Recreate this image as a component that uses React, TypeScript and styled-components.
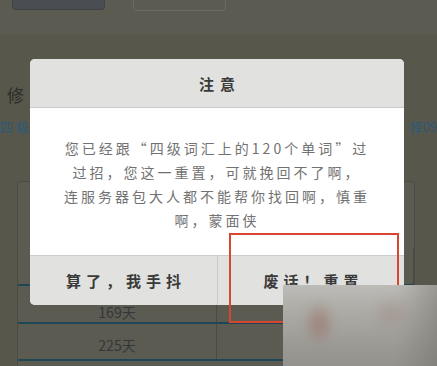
import React from "react";
import styled, { createGlobalStyle } from "styled-components";

const GlobalStyle = createGlobalStyle`
  html, body {
    margin: 0;
    padding: 0;
    background: #58574c;
  }
  body {
    font-family: "Noto Sans CJK SC", "Noto Sans", sans-serif;
  }
`;

const Page = styled.div`
  position: relative;
  width: 437px;
  height: 366px;
  overflow: hidden;
  background: #58574c;
`;

const TopBar = styled.div`
  display: flex;
  align-items: flex-start;
  gap: 28px;
  height: 35px;
  padding-left: 12px;
  background: #5c5b51;
`;

const TabButton = styled.div<{ $active?: boolean }>`
  width: 93px;
  height: ${(p) => (p.$active ? "10px" : "11px")};
  box-sizing: border-box;
  border-radius: 0 0 4px 4px;
  background: ${(p) => (p.$active ? "#4a4d51" : "transparent")};
  border: 1px solid ${(p) => (p.$active ? "#3f4246" : "#6b6a60")};
  border-top: none;
`;

const Heading = styled.div`
  padding: 50px 0 0 7px;
  height: 28px;
  font-size: 17px;
  line-height: 20px;
  color: #2d2d28;
`;

const InfoRow = styled.div`
  display: flex;
  justify-content: space-between;
  height: 62px;
  padding-top: 6px;
  font-size: 13px;
  line-height: 16px;
  color: #2b5a78;
`;

const Panel = styled.div`
  margin: 0 22px 0 17px;
  height: 200px;
  border-radius: 4px 4px 0 0;
  border: 1px solid #4d4c44;
  border-bottom: none;
  background: #5c5b51;
  display: flex;
  flex-direction: column;
  padding-top: 66px;
`;

const TableRow = styled.div<{ $height?: number }>`
  display: grid;
  grid-template-columns: 199px 1fr;
  height: ${(p) => p.$height ?? 38}px;
  flex-shrink: 0;
  border-bottom: 2px solid #1d4656;
  box-sizing: border-box;
`;

const Cell = styled.div<{ $offset?: number }>`
  display: flex;
  align-items: center;
  justify-content: center;
  font-size: 14px;
  color: #34373a;
  border-right: 1px solid #4a4942;
  padding-top: ${(p) => p.$offset ?? 4}px;
`;

const Dialog = styled.div`
  position: absolute;
  left: 30px;
  top: 59px;
  width: 374px;
  border-radius: 5px;
  overflow: hidden;
  background: #fff;
  display: flex;
  flex-direction: column;
`;

const DialogHeader = styled.div`
  height: 48px;
  display: flex;
  align-items: center;
  justify-content: center;
  background: #e1e1df;
  border-bottom: 1px solid #c9c9c7;
  font-size: 15px;
  font-weight: bold;
  letter-spacing: 6px;
  color: #3a3a3a;
  padding-left: 6px;
`;

const DialogBody = styled.div`
  height: 147px;
  box-sizing: border-box;
  padding-top: 28px;
  text-align: center;
  font-size: 14px;
  line-height: 24px;
  letter-spacing: 3px;
  color: #727272;
`;

const DialogFooter = styled.div`
  height: 49px;
  display: grid;
  grid-template-columns: 187px 1fr;
  background: #e1e1df;
  border-top: 1px solid #cdcdcb;
`;

const FooterButton = styled.div`
  display: flex;
  align-items: center;
  justify-content: center;
  font-size: 15px;
  font-weight: bold;
  letter-spacing: 5px;
  color: #3a3a3a;
  padding-left: 5px;
  & + & {
    border-left: 1px solid #cacac8;
  }
`;

const Highlight = styled.div`
  position: absolute;
  left: 229px;
  top: 233px;
  width: 170px;
  height: 90px;
  box-sizing: border-box;
  border: 2px solid #d9452f;
`;

const BlurFrame = styled.div`
  position: absolute;
  left: 283px;
  top: 285px;
  width: 154px;
  height: 81px;
  overflow: hidden;
  background: #a8a7a2;
`;

const BlurFill = styled.div`
  width: 180px;
  height: 110px;
  margin: -12px 0 0 -12px;
  background:
    radial-gradient(ellipse 16px 24px at 48px 50px, rgba(148, 96, 82, 0.55), transparent),
    radial-gradient(ellipse 20px 20px at 120px 40px, rgba(150, 112, 104, 0.3), transparent),
    linear-gradient(90deg, transparent 0%, transparent 70%, rgba(110, 108, 100, 0.6) 100%),
    linear-gradient(180deg, #c4c3bf 0%, #afaea9 30%, #9c9a95 65%, #8c8b85 100%);
  filter: blur(5px);
`;

export default function App() {
  return (
    <Page>
      <GlobalStyle />
      <TopBar>
        <TabButton $active />
        <TabButton />
      </TopBar>
      <Heading>修</Heading>
      <InfoRow>
        <span>四 级</span>
        <span>择09</span>
      </InfoRow>
      <Panel>
        <TableRow>
          <Cell />
          <Cell />
        </TableRow>
        <TableRow>
          <Cell $offset={16}>169天</Cell>
          <Cell />
        </TableRow>
        <TableRow $height={37}>
          <Cell $offset={6}>225天</Cell>
          <Cell />
        </TableRow>
      </Panel>

      <Dialog>
        <DialogHeader>注意</DialogHeader>
        <DialogBody>
          您已经跟“四级词汇上的120个单词”过
          <br />
          过招，您这一重置，可就挽回不了啊，
          <br />
          连服务器包大人都不能帮你找回啊，慎重
          <br />
          啊，蒙面侠
        </DialogBody>
        <DialogFooter>
          <FooterButton>算了，我手抖</FooterButton>
          <FooterButton>废话！重置</FooterButton>
        </DialogFooter>
      </Dialog>
      <Highlight />
      <BlurFrame>
        <BlurFill />
      </BlurFrame>
    </Page>
  );
}
